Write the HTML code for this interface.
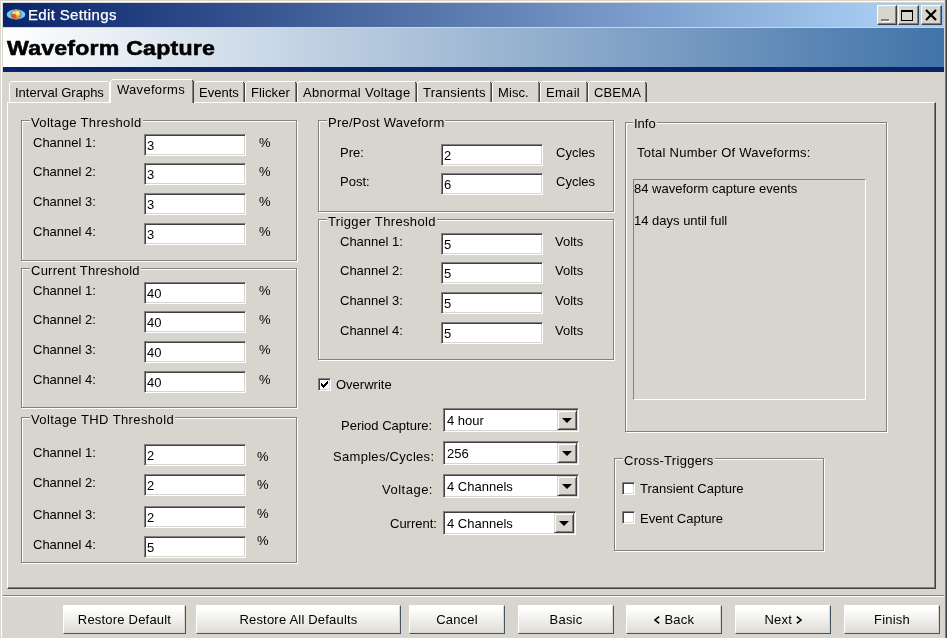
<!DOCTYPE html>
<html><head><meta charset="utf-8"><style>
*{margin:0;padding:0;box-sizing:border-box}
html,body{width:947px;height:638px;overflow:hidden;background:#d8d5ce;font-family:"Liberation Sans",sans-serif;font-size:13px;color:#000}
.a{position:absolute}
.t{position:absolute;white-space:nowrap;line-height:15px;font-size:13px}
.ed{position:absolute;background:#fff;border:1px solid;border-color:#808080 #fff #fff #808080;box-shadow:inset 1px 1px 0 #404040,inset -1px -1px 0 #d8d5ce}
.sk{position:absolute;border:1px solid;border-color:#808080 #fff #fff #808080}
.gb{position:absolute;border:1px solid #808080;box-shadow:1px 1px 0 #fff,inset 1px 1px 0 #fff}
.cb{position:absolute;background:#fff;border:1px solid;border-color:#808080 #fff #fff #808080;box-shadow:inset 1px 1px 0 #404040,inset -1px -1px 0 #d8d5ce}
.cbb{position:absolute;right:1px;top:1px;width:20px;height:20px;background:#d8d5ce;border:1px solid;border-color:#d8d5ce #404040 #404040 #d8d5ce;box-shadow:inset 1px 1px 0 #fff,inset -1px -1px 0 #808080}
.arr{position:absolute;left:4px;top:7px;width:0;height:0;border-left:5px solid transparent;border-right:5px solid transparent;border-top:5px solid #000}
.ck{position:absolute;width:13px;height:13px;background:#fff;border:1px solid;border-color:#808080 #fff #fff #808080;box-shadow:inset 1px 1px 0 #404040,inset -1px -1px 0 #d8d5ce}
.bt{position:absolute;text-align:center;letter-spacing:0.2px;background:linear-gradient(#fff 10%,#dedbd4);border:1px solid;border-color:#fff #46555f #46555f #fff;box-shadow:inset -1px -1px 0 #d8d5ce}
.tab{position:absolute;border-left:1px solid #fff;border-top:1px solid #fff;border-right:2px solid #404040;background:#d8d5ce}
.tab span{position:absolute;left:5px;top:2px;line-height:15px;white-space:nowrap}
.tab.sel span{left:6px;top:3px}
</style></head><body><div id="root" style="position:absolute;left:0;top:0;width:947px;height:638px;will-change:transform">
<!-- window frame -->
<div class="a" style="left:1px;top:1px;width:943px;height:637px;border-left:1px solid #fff;border-top:1px solid #fff"></div>
<div class="a" style="left:945px;top:0;width:1px;height:638px;background:#808080"></div>
<div class="a" style="left:946px;top:0;width:1px;height:638px;background:#404040"></div>
<!-- title bar -->
<div class="a" style="left:3px;top:3px;width:941px;height:24px;background:linear-gradient(90deg,#0a246a 0px,#a6caf0 870px)"></div>
<svg class="a" style="left:6px;top:8px" width="20" height="13" viewBox="0 0 20 13">
<defs><radialGradient id="og" cx="0.7" cy="0.35" r="0.75"><stop offset="0" stop-color="#ffffff"/><stop offset="0.2" stop-color="#ffe070"/><stop offset="0.5" stop-color="#ffa010"/><stop offset="1" stop-color="#f06010"/></radialGradient></defs>
<ellipse cx="10" cy="6.5" rx="9.3" ry="5" fill="#76ccf4"/>
<ellipse cx="10" cy="6.5" rx="5.6" ry="4.9" fill="#6a90b8"/>
<ellipse cx="9.9" cy="6.4" rx="4.3" ry="4.4" fill="url(#og)"/>
<ellipse cx="7.9" cy="8.2" rx="2.3" ry="2.1" fill="#f04a0a" opacity="0.85"/>
<ellipse cx="7.8" cy="4.8" rx="1.8" ry="1.3" fill="#8ff0ff"/>
</svg>
<div class="a" style="left:28px;top:6px;font-size:15px;line-height:17px;color:#fff;white-space:nowrap;letter-spacing:0.35px;-webkit-text-stroke:0.25px #fff">Edit Settings</div>
<div class="tb" style="position:absolute;left:877px;top:5px;width:20px;height:20px"></div>
<!-- header -->
<div class="a" style="left:3px;top:28px;width:941px;height:39px;background:linear-gradient(90deg,#ffffff,#4173a9)"></div>
<div class="a" style="left:7px;top:35.5px;font-weight:bold;font-size:21px;line-height:23px;letter-spacing:0.2px;white-space:nowrap;transform:scaleX(1.1);transform-origin:0 0;-webkit-text-stroke:0.6px #000">Waveform Capture</div>
<div class="a" style="left:3px;top:67px;width:941px;height:5px;background:#0a246a"></div>
<!-- title buttons -->
<div class="a tbtn" style="left:877px;top:5px;width:20px;height:20px"><div class="a" style="left:4px;top:14px;width:8px;height:2px;background:#fff"></div><div class="a" style="left:3px;top:13px;width:8px;height:2px;background:#808080"></div></div>
<div class="a tbtn" style="left:898px;top:5px;width:21px;height:20px"><div class="a" style="left:2px;top:4px;width:12px;height:11px;border:1px solid #000;border-top-width:2px"></div></div>
<div class="a tbtn" style="left:921px;top:5px;width:21px;height:20px"><svg class="a" style="left:3px;top:3px" width="12" height="12" viewBox="0 0 12 12"><path d="M1 1L11 11M11 1L1 11" stroke="#000" stroke-width="2.2"/></svg></div>
<style>.tbtn{background:#d8d5ce;border:1px solid;border-color:#fff #404040 #404040 #fff;box-shadow:inset -1px -1px 0 #808080}</style>
<!-- tabs -->
<div class="a" style="left:7px;top:102px;width:929px;height:487px;border-left:1px solid #fff;border-top:1px solid #fff;border-right:1px solid #404040;border-bottom:1px solid #404040;box-shadow:inset -1px -1px 0 #808080"></div>
<div class="a" style="left:11px;top:81px;width:97px;height:1px;background:#fff"></div>
<div class="a" style="left:10px;top:82px;width:1px;height:1px;background:#fff"></div>
<div class="a" style="left:9px;top:83px;width:1px;height:19px;background:#fff"></div>
<div class="a" style="left:109px;top:82px;width:1px;height:20px;background:#fff"></div>
<div class="t" style="left:15px;top:85px;letter-spacing:0px">Interval Graphs</div>
<div class="a" style="left:112px;top:79px;width:80px;height:1px;background:#fff"></div>
<div class="a" style="left:111px;top:80px;width:1px;height:1px;background:#fff"></div>
<div class="a" style="left:110px;top:81px;width:1px;height:22px;background:#fff"></div>
<div class="a" style="left:192px;top:80px;width:1px;height:1px;background:#404040"></div>
<div class="a" style="left:192px;top:81px;width:1px;height:22px;background:#808080"></div>
<div class="a" style="left:193px;top:81px;width:1px;height:22px;background:#404040"></div>
<div class="t" style="left:117px;top:82px;letter-spacing:0.3px">Waveforms</div>
<div class="a" style="left:196px;top:81px;width:47px;height:1px;background:#fff"></div>
<div class="a" style="left:195px;top:82px;width:1px;height:1px;background:#fff"></div>
<div class="a" style="left:243px;top:82px;width:1px;height:1px;background:#404040"></div>
<div class="a" style="left:243px;top:83px;width:1px;height:19px;background:#808080"></div>
<div class="a" style="left:244px;top:83px;width:1px;height:19px;background:#404040"></div>
<div class="t" style="left:199px;top:85px;letter-spacing:0px">Events</div>
<div class="a" style="left:247px;top:81px;width:48px;height:1px;background:#fff"></div>
<div class="a" style="left:246px;top:82px;width:1px;height:1px;background:#fff"></div>
<div class="a" style="left:245px;top:83px;width:1px;height:19px;background:#fff"></div>
<div class="a" style="left:295px;top:82px;width:1px;height:1px;background:#404040"></div>
<div class="a" style="left:295px;top:83px;width:1px;height:19px;background:#808080"></div>
<div class="a" style="left:296px;top:83px;width:1px;height:19px;background:#404040"></div>
<div class="t" style="left:251px;top:85px;letter-spacing:0.1px">Flicker</div>
<div class="a" style="left:299px;top:81px;width:116px;height:1px;background:#fff"></div>
<div class="a" style="left:298px;top:82px;width:1px;height:1px;background:#fff"></div>
<div class="a" style="left:297px;top:83px;width:1px;height:19px;background:#fff"></div>
<div class="a" style="left:415px;top:82px;width:1px;height:1px;background:#404040"></div>
<div class="a" style="left:415px;top:83px;width:1px;height:19px;background:#808080"></div>
<div class="a" style="left:416px;top:83px;width:1px;height:19px;background:#404040"></div>
<div class="t" style="left:303px;top:85px;letter-spacing:0.3px">Abnormal Voltage</div>
<div class="a" style="left:419px;top:81px;width:71px;height:1px;background:#fff"></div>
<div class="a" style="left:418px;top:82px;width:1px;height:1px;background:#fff"></div>
<div class="a" style="left:417px;top:83px;width:1px;height:19px;background:#fff"></div>
<div class="a" style="left:490px;top:82px;width:1px;height:1px;background:#404040"></div>
<div class="a" style="left:490px;top:83px;width:1px;height:19px;background:#808080"></div>
<div class="a" style="left:491px;top:83px;width:1px;height:19px;background:#404040"></div>
<div class="t" style="left:423px;top:85px;letter-spacing:0.25px">Transients</div>
<div class="a" style="left:494px;top:81px;width:44px;height:1px;background:#fff"></div>
<div class="a" style="left:493px;top:82px;width:1px;height:1px;background:#fff"></div>
<div class="a" style="left:492px;top:83px;width:1px;height:19px;background:#fff"></div>
<div class="a" style="left:538px;top:82px;width:1px;height:1px;background:#404040"></div>
<div class="a" style="left:538px;top:83px;width:1px;height:19px;background:#808080"></div>
<div class="a" style="left:539px;top:83px;width:1px;height:19px;background:#404040"></div>
<div class="t" style="left:498px;top:85px;letter-spacing:0.1px">Misc.</div>
<div class="a" style="left:542px;top:81px;width:44px;height:1px;background:#fff"></div>
<div class="a" style="left:541px;top:82px;width:1px;height:1px;background:#fff"></div>
<div class="a" style="left:540px;top:83px;width:1px;height:19px;background:#fff"></div>
<div class="a" style="left:586px;top:82px;width:1px;height:1px;background:#404040"></div>
<div class="a" style="left:586px;top:83px;width:1px;height:19px;background:#808080"></div>
<div class="a" style="left:587px;top:83px;width:1px;height:19px;background:#404040"></div>
<div class="t" style="left:546px;top:85px;letter-spacing:0.3px">Email</div>
<div class="a" style="left:590px;top:81px;width:55px;height:1px;background:#fff"></div>
<div class="a" style="left:589px;top:82px;width:1px;height:1px;background:#fff"></div>
<div class="a" style="left:588px;top:83px;width:1px;height:19px;background:#fff"></div>
<div class="a" style="left:645px;top:82px;width:1px;height:1px;background:#404040"></div>
<div class="a" style="left:645px;top:83px;width:1px;height:19px;background:#808080"></div>
<div class="a" style="left:646px;top:83px;width:1px;height:19px;background:#404040"></div>
<div class="t" style="left:594px;top:85px;letter-spacing:0.15px">CBEMA</div>
<div class="a" style="left:111px;top:102px;width:81px;height:1px;background:#d8d5ce"></div>
<div class="gb" style="left:21px;top:120px;width:276px;height:141px"></div>
<div class="t" style="left:30px;top:115px;background:#d8d5ce;padding:0 1px;letter-spacing:0.35px">Voltage Threshold</div>
<div class="t" style="left:33px;top:135px;">Channel 1:</div>
<div class="ed" style="left:144px;top:134px;width:102px;height:22px"></div>
<div class="t" style="left:147px;top:138px;">3</div>
<div class="t" style="left:259px;top:135px;">%</div>
<div class="t" style="left:33px;top:164px;">Channel 2:</div>
<div class="ed" style="left:144px;top:163px;width:102px;height:22px"></div>
<div class="t" style="left:147px;top:167px;">3</div>
<div class="t" style="left:259px;top:164px;">%</div>
<div class="t" style="left:33px;top:194px;">Channel 3:</div>
<div class="ed" style="left:144px;top:193px;width:102px;height:22px"></div>
<div class="t" style="left:147px;top:197px;">3</div>
<div class="t" style="left:259px;top:194px;">%</div>
<div class="t" style="left:33px;top:224px;">Channel 4:</div>
<div class="ed" style="left:144px;top:223px;width:102px;height:22px"></div>
<div class="t" style="left:147px;top:227px;">3</div>
<div class="t" style="left:259px;top:224px;">%</div>
<div class="gb" style="left:21px;top:268px;width:276px;height:140px"></div>
<div class="t" style="left:30px;top:263px;background:#d8d5ce;padding:0 1px;letter-spacing:0.25px">Current Threshold</div>
<div class="t" style="left:33px;top:283px;">Channel 1:</div>
<div class="ed" style="left:144px;top:282px;width:102px;height:22px"></div>
<div class="t" style="left:147px;top:286px;">40</div>
<div class="t" style="left:259px;top:283px;">%</div>
<div class="t" style="left:33px;top:312px;">Channel 2:</div>
<div class="ed" style="left:144px;top:311px;width:102px;height:22px"></div>
<div class="t" style="left:147px;top:315px;">40</div>
<div class="t" style="left:259px;top:312px;">%</div>
<div class="t" style="left:33px;top:342px;">Channel 3:</div>
<div class="ed" style="left:144px;top:341px;width:102px;height:22px"></div>
<div class="t" style="left:147px;top:345px;">40</div>
<div class="t" style="left:259px;top:342px;">%</div>
<div class="t" style="left:33px;top:372px;">Channel 4:</div>
<div class="ed" style="left:144px;top:371px;width:102px;height:22px"></div>
<div class="t" style="left:147px;top:375px;">40</div>
<div class="t" style="left:259px;top:372px;">%</div>
<div class="gb" style="left:21px;top:417px;width:276px;height:146px"></div>
<div class="t" style="left:30px;top:412px;background:#d8d5ce;padding:0 1px;letter-spacing:0.4px">Voltage THD Threshold</div>
<div class="t" style="left:33px;top:445px;">Channel 1:</div>
<div class="ed" style="left:144px;top:444px;width:102px;height:22px"></div>
<div class="t" style="left:147px;top:448px;">2</div>
<div class="t" style="left:257px;top:449px;">%</div>
<div class="t" style="left:33px;top:475px;">Channel 2:</div>
<div class="ed" style="left:144px;top:474px;width:102px;height:22px"></div>
<div class="t" style="left:147px;top:478px;">2</div>
<div class="t" style="left:257px;top:477px;">%</div>
<div class="t" style="left:33px;top:507px;">Channel 3:</div>
<div class="ed" style="left:144px;top:506px;width:102px;height:22px"></div>
<div class="t" style="left:147px;top:510px;">2</div>
<div class="t" style="left:257px;top:506px;">%</div>
<div class="t" style="left:33px;top:537px;">Channel 4:</div>
<div class="ed" style="left:144px;top:536px;width:102px;height:22px"></div>
<div class="t" style="left:147px;top:540px;">5</div>
<div class="t" style="left:257px;top:533px;">%</div>
<div class="gb" style="left:318px;top:120px;width:296px;height:92px"></div>
<div class="t" style="left:327px;top:115px;background:#d8d5ce;padding:0 1px;letter-spacing:0.25px">Pre/Post Waveform</div>
<div class="t" style="left:340px;top:145px;">Pre:</div>
<div class="ed" style="left:441px;top:144px;width:102px;height:22px"></div>
<div class="t" style="left:444px;top:148px;">2</div>
<div class="t" style="left:556px;top:145px;">Cycles</div>
<div class="t" style="left:340px;top:174px;">Post:</div>
<div class="ed" style="left:441px;top:173px;width:102px;height:22px"></div>
<div class="t" style="left:444px;top:177px;">6</div>
<div class="t" style="left:556px;top:174px;">Cycles</div>
<div class="gb" style="left:318px;top:219px;width:296px;height:141px"></div>
<div class="t" style="left:327px;top:214px;background:#d8d5ce;padding:0 1px;letter-spacing:0.35px">Trigger Threshold</div>
<div class="t" style="left:340px;top:234px;">Channel 1:</div>
<div class="ed" style="left:441px;top:233px;width:102px;height:22px"></div>
<div class="t" style="left:444px;top:237px;">5</div>
<div class="t" style="left:555px;top:234px;">Volts</div>
<div class="t" style="left:340px;top:263px;">Channel 2:</div>
<div class="ed" style="left:441px;top:262px;width:102px;height:22px"></div>
<div class="t" style="left:444px;top:266px;">5</div>
<div class="t" style="left:555px;top:263px;">Volts</div>
<div class="t" style="left:340px;top:293px;">Channel 3:</div>
<div class="ed" style="left:441px;top:292px;width:102px;height:22px"></div>
<div class="t" style="left:444px;top:296px;">5</div>
<div class="t" style="left:555px;top:293px;">Volts</div>
<div class="t" style="left:340px;top:323px;">Channel 4:</div>
<div class="ed" style="left:441px;top:322px;width:102px;height:22px"></div>
<div class="t" style="left:444px;top:326px;">5</div>
<div class="t" style="left:555px;top:323px;">Volts</div>
<div class="ck" style="left:318px;top:378px"><svg width="7" height="7" style="position:absolute;left:2px;top:2px" shape-rendering="crispEdges"><path d="M6 0h1v1h-1zM5 1h1v1h-1zM6 1h1v1h-1zM0 2h1v1h-1zM4 2h1v1h-1zM5 2h1v1h-1zM6 2h1v1h-1zM0 3h1v1h-1zM1 3h1v1h-1zM3 3h1v1h-1zM4 3h1v1h-1zM5 3h1v1h-1zM0 4h1v1h-1zM1 4h1v1h-1zM2 4h1v1h-1zM3 4h1v1h-1zM4 4h1v1h-1zM1 5h1v1h-1zM2 5h1v1h-1zM3 5h1v1h-1zM2 6h1v1h-1z" fill="#000"/></svg></div>
<div class="t" style="left:336px;top:377px;">Overwrite</div>
<div class="t" style="left:341px;top:418px;">Period Capture:</div>
<div class="cb" style="left:443px;top:408px;width:136px;height:24px"><div class="cbb"><div class="arr"></div></div></div>
<div class="t" style="left:447px;top:413px;">4 hour</div>
<div class="t" style="left:333px;top:449px;letter-spacing:0.3px">Samples/Cycles:</div>
<div class="cb" style="left:443px;top:441px;width:136px;height:24px"><div class="cbb"><div class="arr"></div></div></div>
<div class="t" style="left:447px;top:446px;">256</div>
<div class="t" style="left:382px;top:482px;letter-spacing:0.5px">Voltage:</div>
<div class="cb" style="left:443px;top:474px;width:136px;height:24px"><div class="cbb"><div class="arr"></div></div></div>
<div class="t" style="left:447px;top:479px;">4 Channels</div>
<div class="t" style="left:390px;top:516px;">Current:</div>
<div class="cb" style="left:443px;top:511px;width:133px;height:24px"><div class="cbb"><div class="arr"></div></div></div>
<div class="t" style="left:447px;top:516px;">4 Channels</div>
<div class="gb" style="left:625px;top:122px;width:262px;height:310px"></div>
<div class="t" style="left:633px;top:116px;background:#d8d5ce;padding:0 1px;">Info</div>
<div class="t" style="left:637px;top:145px;letter-spacing:0.25px">Total Number Of Waveforms:</div>
<div class="sk" style="left:633px;top:179px;width:233px;height:221px"></div>
<div class="t" style="left:634px;top:181px;">84 waveform capture events</div>
<div class="t" style="left:634px;top:213px;">14 days until full</div>
<div class="gb" style="left:614px;top:458px;width:210px;height:93px"></div>
<div class="t" style="left:623px;top:453px;background:#d8d5ce;padding:0 1px;letter-spacing:0.3px">Cross-Triggers</div>
<div class="ck" style="left:622px;top:482px"></div>
<div class="t" style="left:640px;top:481px;">Transient Capture</div>
<div class="ck" style="left:622px;top:511px"></div>
<div class="t" style="left:640px;top:511px;">Event Capture</div>
<div class="bt" style="left:63px;top:605px;width:123px;height:29px;line-height:27px">Restore Default</div>
<div class="bt" style="left:196px;top:605px;width:205px;height:29px;line-height:27px">Restore All Defaults</div>
<div class="bt" style="left:409px;top:605px;width:96px;height:29px;line-height:27px">Cancel</div>
<div class="bt" style="left:518px;top:605px;width:96px;height:29px;line-height:27px">Basic</div>
<div class="bt" style="left:626px;top:605px;width:96px;height:29px;line-height:27px"><svg width="6" height="8" style="vertical-align:0;margin-right:4.5px" viewBox="0 0 6 8"><path d="M5.2 0.6L1 4L5.2 7.4" fill="none" stroke="#000" stroke-width="1.5"/></svg>Back</div>
<div class="bt" style="left:735px;top:605px;width:96px;height:29px;line-height:27px">Next<svg width="6" height="8" style="vertical-align:0;margin-left:3.5px" viewBox="0 0 6 8"><path d="M0.8 0.6L5 4L0.8 7.4" fill="none" stroke="#000" stroke-width="1.5"/></svg></div>
<div class="bt" style="left:844px;top:605px;width:96px;height:29px;line-height:27px">Finish</div>
<!-- separator -->
<div class="a" style="left:3px;top:595px;width:941px;height:1px;background:#808080"></div>
<div class="a" style="left:3px;top:596px;width:941px;height:1px;background:#fff"></div>
</div></body></html>
